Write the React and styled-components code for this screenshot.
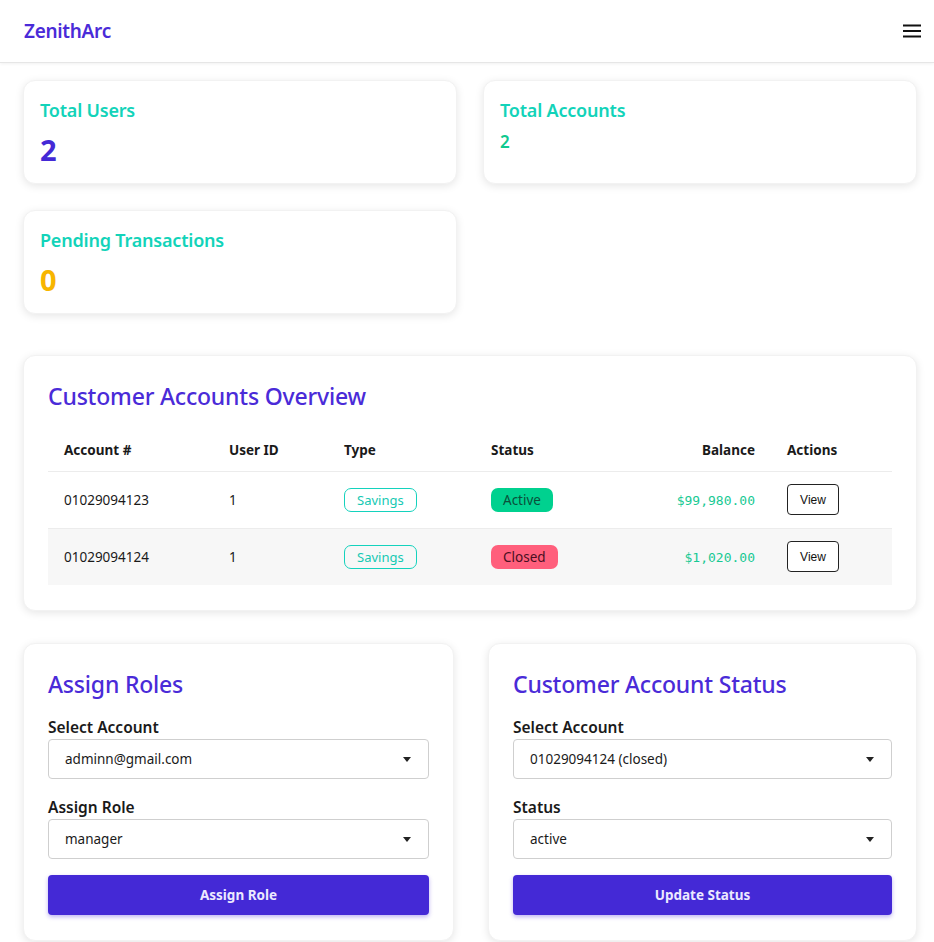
import React from "react";
import styled, { createGlobalStyle } from "styled-components";

const Global = createGlobalStyle`
  body {
    margin: 0;
    background: #ffffff;
    font-family: "Noto Sans", "Open Sans", sans-serif;
    color: #1a1a1a;
  }
`;

const Nav = styled.header`
  height: 62px;
  display: flex;
  align-items: center;
  justify-content: space-between;
  padding: 0 12px 0 24px;
  border-bottom: 1px solid #e6e6e6;
  box-shadow: 0 1px 3px rgba(0, 0, 0, 0.06);
`;

const Logo = styled.div`
  font-size: 19px;
  font-weight: 600;
  color: #4a2bd8;
  letter-spacing: -0.3px;
`;

const Burger = styled.button`
  border: none;
  background: none;
  padding: 0;
  display: flex;
  cursor: pointer;
`;

const Main = styled.main`
  padding: 17px 17px 24px 23px;
`;

const StatGrid = styled.div`
  display: grid;
  grid-template-columns: 1fr 1fr;
  gap: 26px;
`;

const Card = styled.section`
  background: #fff;
  border-radius: 12px;
  box-shadow: 0 2px 8px rgba(0, 0, 0, 0.1);
  border: 1px solid #f2f2f2;
  box-sizing: border-box;
  padding: 24px;
`;

const StatCard = styled(Card)`
  height: 104px;
  padding: 15px 16px;
`;

const StatTitle = styled.div`
  font-size: 18px;
  font-weight: 600;
  color: #12d3b9;
  letter-spacing: -0.2px;
  line-height: 28px;
`;

const StatValue = styled.div`
  margin-top: ${(p) => (p.$small ? "6px" : "7px")};
  font-size: ${(p) => (p.$small ? "17px" : "29px")};
  font-weight: ${(p) => (p.$small ? 600 : 700)};
  color: ${(p) => p.$color};
  line-height: ${(p) => (p.$small ? "24px" : "38px")};
`;

const Overview = styled(Card)`
  margin-top: 41px;
  padding: 22px 24px 24px;
`;

const Heading = styled.h2`
  margin: 2px 0 0;
  font-size: 23px;
  font-weight: 500;
  color: #4a2bd8;
  letter-spacing: -0.2px;
  line-height: 32px;
`;

const Table = styled.table`
  width: 100%;
  table-layout: fixed;
  margin-top: 17px;
  border-collapse: collapse;
  font-size: 13.5px;
`;

const Th = styled.th`
  box-sizing: border-box;
  text-align: ${(p) => p.$align || "left"};
  font-weight: 700;
  padding: 0 16px;
  height: 42px;
  border-bottom: 1px solid #ececec;
  width: ${(p) => p.$w || "auto"};
`;

const Tr = styled.tr`
  background: ${(p) => (p.$alt ? "#f7f7f7" : "#fff")};
  border-bottom: 1px solid ${(p) => (p.$last ? "transparent" : "#ececec")};
`;

const Td = styled.td`
  padding: 0 16px;
  height: 56px;
  text-align: ${(p) => p.$align || "left"};
  white-space: nowrap;
`;

const TypeBadge = styled.span`
  display: inline-block;
  border: 1px solid #14d2bd;
  color: #14c9b3;
  border-radius: 7px;
  padding: 0 12px;
  line-height: 22px;
  font-size: 13px;
`;

const StatusBadge = styled.span`
  display: inline-block;
  background: ${(p) => (p.$active ? "#00d18f" : "#ff5f7c")};
  color: ${(p) => (p.$active ? "#0b4f3a" : "#4a0f22")};
  border-radius: 7px;
  padding: 0 12px;
  line-height: 24px;
  font-size: 13.5px;
`;

const Money = styled.span`
  font-family: "DejaVu Sans Mono", "Liberation Mono", monospace;
  font-size: 13px;
  color: #17c993;
`;

const ViewButton = styled.button`
  font-family: "Liberation Sans", Arial, sans-serif;
  font-size: 12px;
  background: #fff;
  color: #111;
  border: 1px solid #222;
  border-radius: 4px;
  width: 52px;
  height: 31px;
  cursor: pointer;
`;

const FormGrid = styled.div`
  margin-top: 32px;
  display: grid;
  grid-template-columns: 431px 1fr;
  gap: 34px;
`;

const FormCard = styled(Card)`
  padding: 22px 24px 25px;
`;

const Label = styled.label`
  display: block;
  font-size: 15.5px;
  font-weight: 600;
  margin-top: ${(p) => (p.$first ? "16px" : "17px")};
  line-height: 22px;
`;

const SelectBox = styled.div`
  position: relative;
  margin-top: 1px;
`;

const Select = styled.select`
  width: 100%;
  height: 40px;
  appearance: none;
  border: 1px solid #cfcfcf;
  border-radius: 4px;
  background: #fff;
  padding: 0 16px;
  font-family: "Noto Sans", "Open Sans", sans-serif;
  font-size: 13.5px;
  color: #1a1a1a;
`;

const Caret = styled.span`
  position: absolute;
  right: 18px;
  top: 18px;
  width: 0;
  height: 0;
  border-left: 4px solid transparent;
  border-right: 4px solid transparent;
  border-top: 5px solid #222;
  pointer-events: none;
`;

const Submit = styled.button`
  width: 100%;
  height: 40px;
  margin-top: 16px;
  border: none;
  border-radius: 4px;
  background: #4429d6;
  color: #ece9ff;
  font-family: "Noto Sans", "Open Sans", sans-serif;
  font-size: 13.5px;
  font-weight: 700;
  box-shadow: 0 2px 4px rgba(68, 41, 214, 0.35);
  cursor: pointer;
`;

function Field({ label, value, first }) {
  return (
    <>
      <Label $first={first}>{label}</Label>
      <SelectBox>
        <Select defaultValue={value}>
          <option value={value}>{value}</option>
        </Select>
        <Caret />
      </SelectBox>
    </>
  );
}

const accounts = [
  { num: "01029094123", user: "1", type: "Savings", active: true, balance: "$99,980.00" },
  { num: "01029094124", user: "1", type: "Savings", active: false, balance: "$1,020.00" },
];

export default function App() {
  return (
    <>
      <Global />
      <Nav>
        <Logo>ZenithArc</Logo>
        <Burger aria-label="menu">
          <svg width="20" height="16" viewBox="0 0 20 16">
            <path d="M1 2.5h18M1 8h18M1 13.5h18" stroke="#111" strokeWidth="2" />
          </svg>
        </Burger>
      </Nav>
      <Main>
        <StatGrid>
          <StatCard>
            <StatTitle>Total Users</StatTitle>
            <StatValue $color="#4429d6">2</StatValue>
          </StatCard>
          <StatCard>
            <StatTitle>Total Accounts</StatTitle>
            <StatValue $small $color="#10c98f">2</StatValue>
          </StatCard>
          <StatCard>
            <StatTitle>Pending Transactions</StatTitle>
            <StatValue $color="#f7b500">0</StatValue>
          </StatCard>
        </StatGrid>

        <Overview>
          <Heading>Customer Accounts Overview</Heading>
          <Table>
            <thead>
              <tr>
                <Th $w="165px">Account #</Th>
                <Th $w="115px">User ID</Th>
                <Th $w="147px">Type</Th>
                <Th>Status</Th>
                <Th $align="right" $w="147px">Balance</Th>
                <Th $w="121px">Actions</Th>
              </tr>
            </thead>
            <tbody>
              {accounts.map((a, i) => (
                <Tr key={a.num} $alt={i % 2 === 1} $last={i === accounts.length - 1}>
                  <Td>{a.num}</Td>
                  <Td>{a.user}</Td>
                  <Td>
                    <TypeBadge>{a.type}</TypeBadge>
                  </Td>
                  <Td>
                    <StatusBadge $active={a.active}>
                      {a.active ? "Active" : "Closed"}
                    </StatusBadge>
                  </Td>
                  <Td $align="right">
                    <Money>{a.balance}</Money>
                  </Td>
                  <Td>
                    <ViewButton>View</ViewButton>
                  </Td>
                </Tr>
              ))}
            </tbody>
          </Table>
        </Overview>

        <FormGrid>
          <FormCard>
            <Heading>Assign Roles</Heading>
            <Field first label="Select Account" value="adminn@gmail.com" />
            <Field label="Assign Role" value="manager" />
            <Submit>Assign Role</Submit>
          </FormCard>
          <FormCard>
            <Heading>Customer Account Status</Heading>
            <Field first label="Select Account" value="01029094124 (closed)" />
            <Field label="Status" value="active" />
            <Submit>Update Status</Submit>
          </FormCard>
        </FormGrid>
      </Main>
    </>
  );
}
